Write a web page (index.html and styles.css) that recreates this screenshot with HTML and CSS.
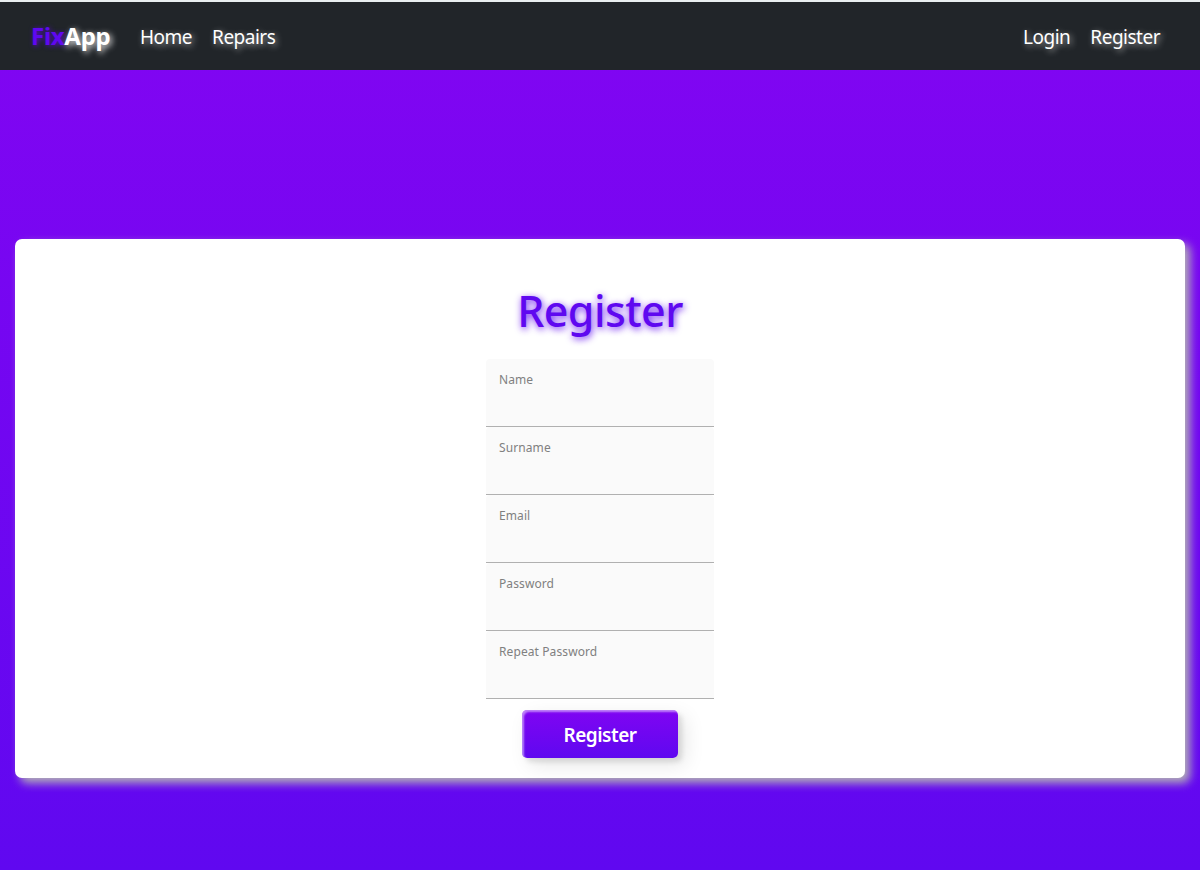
FILE: index.html
```html
<!DOCTYPE html>
<html lang="en">
<head>
    <meta charset="UTF-8">
    <meta name="viewport" content="width=device-width, initial-scale=1.0">
    <title>FixApp</title>
    <link rel="stylesheet" href="styles.css">
</head>
<body>
    <nav class="navbar">
        <a class="brand" href="#"><span class="brand-fix">Fix</span>App</a>
        <div class="nav-left">
            <a class="nav-link" href="#">Home</a>
            <a class="nav-link" href="#">Repairs</a>
        </div>
        <div class="nav-right">
            <a class="nav-link" href="#">Login</a>
            <a class="nav-link" href="#">Register</a>
        </div>
    </nav>

    <main class="content">
        <div class="card">
            <h1 class="title">Register</h1>
            <form class="form">
                <div class="field">
                    <label for="name">Name</label>
                    <input type="text" id="name">
                </div>
                <div class="field">
                    <label for="surname">Surname</label>
                    <input type="text" id="surname">
                </div>
                <div class="field">
                    <label for="email">Email</label>
                    <input type="email" id="email">
                </div>
                <div class="field">
                    <label for="password">Password</label>
                    <input type="password" id="password">
                </div>
                <div class="field">
                    <label for="repeat">Repeat Password</label>
                    <input type="password" id="repeat">
                </div>
                <button class="btn" type="submit">Register</button>
            </form>
        </div>
    </main>
</body>
</html>
```

FILE: styles.css
```css
* {
    box-sizing: border-box;
}
body {
    margin: 0;
    height: 870px;
    display: flex;
    flex-direction: column;
    font-family: "Noto Sans", "Open Sans", sans-serif;
    background: linear-gradient(#8205f2, #6008f0);
    overflow: hidden;
}
.navbar {
    display: flex;
    align-items: center;
    height: 70px;
    padding: 0 40px 0 31px;
    background-color: #212529;
    border-top: 2px solid #e9eef0;
}
.navbar a {
    color: #fff;
    text-decoration: none;
    white-space: nowrap;
}
.brand {
    width: 109px;
    font-size: 24px;
    font-weight: 700;
    letter-spacing: -0.3px;
    line-height: 36px;
    text-shadow: 2px 2px 6px rgba(255, 255, 255, 0.9);
}
.brand-fix {
    color: #5f08f0;
    text-shadow: 1px 1px 5px rgba(95, 8, 240, 0.8);
}
.nav-left,
.nav-right {
    display: flex;
    gap: 20px;
}
.nav-right {
    margin-left: auto;
}
.nav-link {
    padding-top: 2px;
    font-size: 19px;
    line-height: 30px;
    letter-spacing: -0.5px;
    text-shadow: 2px 2px 6px rgba(255, 255, 255, 0.6);
}
.content {
    padding: 169px 15px 0;
}
.card {
    height: 539px;
    padding-top: 42px;
    background-color: #fff;
    border-radius: 7px;
    box-shadow: 5px 5px 10px #b4b4b4;
}
.title {
    margin: 0;
    height: 78px;
    font-size: 43px;
    font-weight: 500;
    line-height: 60px;
    letter-spacing: -0.6px;
    text-align: center;
    color: #5f08f0;
    text-shadow: 1px 2px 7px rgba(95, 8, 240, 0.9);
}
.form {
    display: flex;
    flex-direction: column;
    align-items: center;
}
.field {
    width: 228px;
    height: 68px;
    padding: 12px 13px 0;
    background-color: #fafafa;
    border-bottom: 1px solid #b0b0b0;
    border-radius: 4px 4px 0 0;
}
.field label {
    display: block;
    font-size: 12px;
    line-height: 18px;
    letter-spacing: 0.1px;
    color: #808080;
}
.field input {
    display: block;
    width: 100%;
    height: 30px;
    padding: 0;
    border: none;
    outline: none;
    background: transparent;
}
.btn {
    width: 156px;
    height: 48px;
    margin-top: 11px;
    padding: 0;
    border: none;
    border-radius: 5px;
    background: linear-gradient(#8005f2, #5f08f0);
    box-shadow: inset 2px 2px 2px rgba(255, 255, 255, 0.5), 7px 7px 20px rgba(0, 0, 0, 0.1), 4px 4px 5px rgba(0, 0, 0, 0.1);
    color: #fff;
    font-family: inherit;
    font-size: 19px;
    font-weight: 600;
    line-height: 50px;
    letter-spacing: -0.5px;
    cursor: pointer;
}
```
